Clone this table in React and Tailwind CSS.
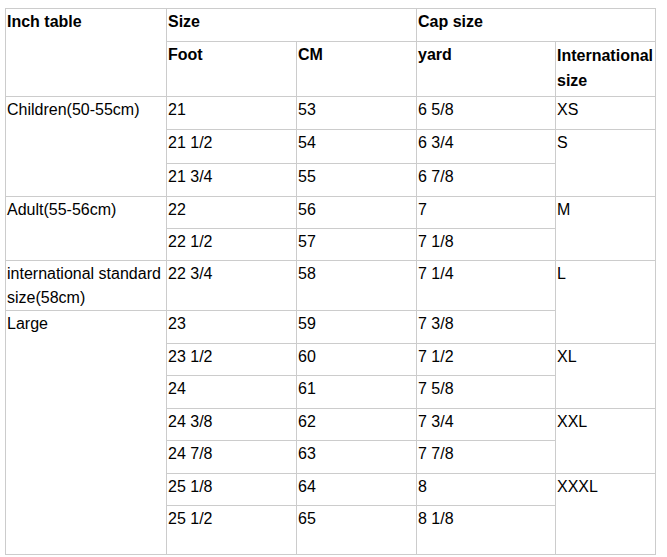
import React from 'react';

const cell = 'border border-[#cccccc] align-top pl-[1px] pt-[1px]';

const body = [
  { h: 33, cells: [['Children(50-55cm)', 3], ['21'], ['53'], ['6 5/8'], ['XS']] },
  { h: 34, cells: [['21 1/2'], ['54'], ['6 3/4'], ['S', 2]] },
  { h: 33, cells: [['21 3/4'], ['55'], ['6 7/8']] },
  { h: 32, cells: [['Adult(55-56cm)', 2], ['22'], ['56'], ['7'], ['M', 2]] },
  { h: 32, cells: [['22 1/2'], ['57'], ['7 1/8']] },
  { h: 47, cells: [['international standard size(58cm)'], ['22 3/4'], ['58'], ['7 1/4'], ['L', 2]] },
  { h: 33, cells: [['Large', 8], ['23'], ['59'], ['7 3/8']] },
  { h: 32, cells: [['23 1/2'], ['60'], ['7 1/2'], ['XL', 2]] },
  { h: 33, cells: [['24'], ['61'], ['7 5/8']] },
  { h: 32, cells: [['24 3/8'], ['62'], ['7 3/4'], ['XXL', 2]] },
  { h: 33, cells: [['24 7/8'], ['63'], ['7 7/8']] },
  { h: 32, cells: [['25 1/8'], ['64'], ['8'], ['XXXL', 2]] },
  { h: 49, cells: [['25 1/2'], ['65'], ['8 1/8']] },
];

export default function App() {
  return (
    <div className="w-[667px] h-[557px] bg-white pl-[5px] pt-[8px] font-['Liberation_Sans',Arial,sans-serif] text-[16px] leading-[24px] text-black">
      <table className="border-collapse table-fixed w-[650px]">
        <colgroup>
          <col className="w-[161px]" />
          <col className="w-[130px]" />
          <col className="w-[120px]" />
          <col className="w-[139px]" />
          <col className="w-[100px]" />
        </colgroup>
        <thead>
          <tr className="h-[33px]">
            <th rowSpan={2} className={`${cell} text-left font-bold`}>Inch table</th>
            <th colSpan={2} className={`${cell} text-left font-bold`}>Size</th>
            <th colSpan={2} className={`${cell} text-left font-bold`}>Cap size</th>
          </tr>
          <tr className="h-[55px]">
            <th className={`${cell} text-left font-bold`}>Foot</th>
            <th className={`${cell} text-left font-bold`}>CM</th>
            <th className={`${cell} text-left font-bold`}>yard</th>
            <th className={`${cell} text-left font-bold leading-[25px]`}>International size</th>
          </tr>
        </thead>
        <tbody>
          {body.map((row, i) => (
            <tr key={i} style={{ height: row.h }}>
              {row.cells.map(([text, span], j) => (
                <td key={j} rowSpan={span || 1} className={cell}>
                  {text}
                </td>
              ))}
            </tr>
          ))}
        </tbody>
      </table>
    </div>
  );
}
